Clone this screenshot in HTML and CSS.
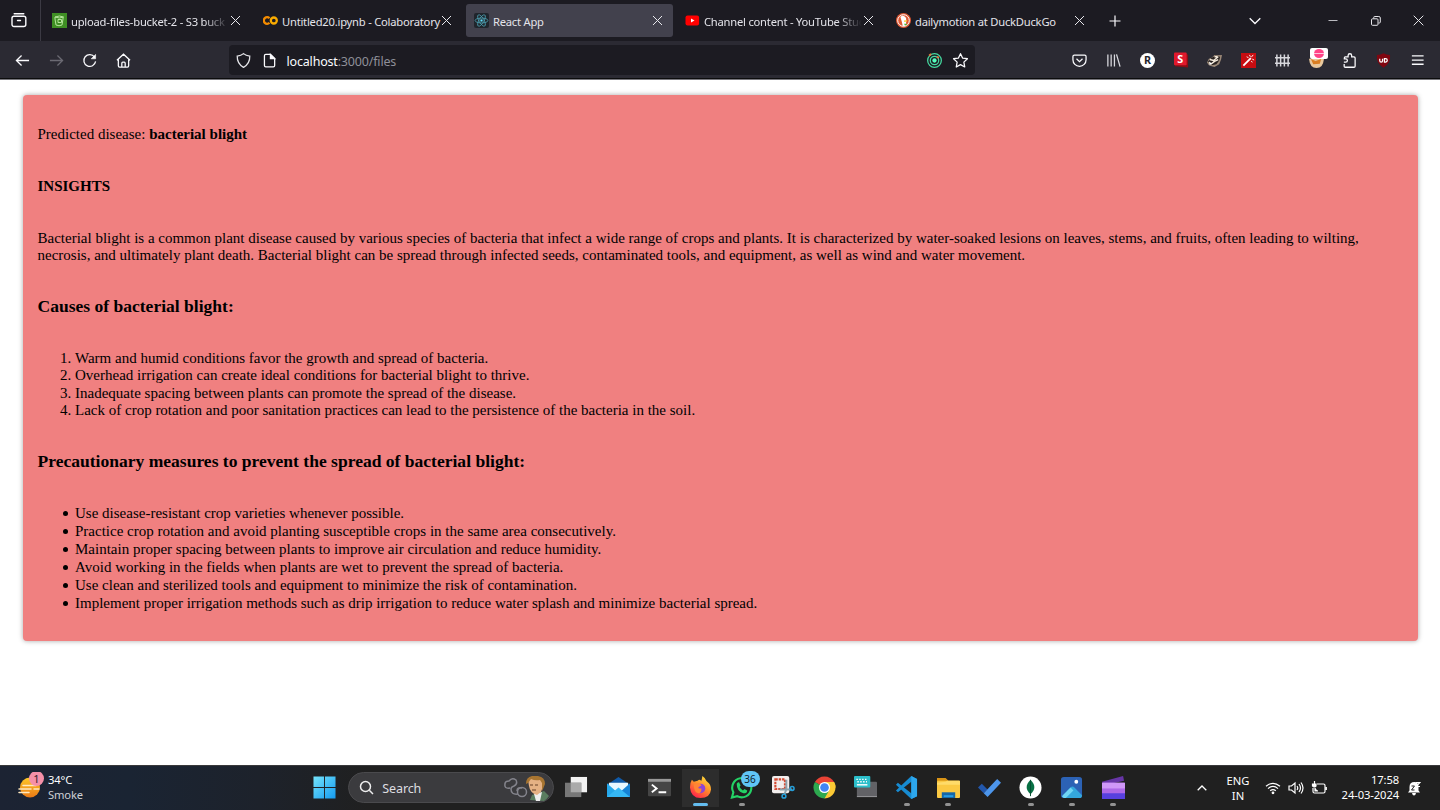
FILE: index.html
```html
<!DOCTYPE html>
<html lang="en">
<head>
<meta charset="utf-8">
<title>React App</title>
<link rel="stylesheet" href="styles.css">
</head>
<body>
<div class="screen">
<header class="tabbar">
  <div class="recent"><svg width="16" height="16" viewBox="0 0 16 16" fill="none" stroke="#fbfbfe" stroke-width="1.4" stroke-linecap="round"><path d="M3.200 1.800h9.600"/><rect x="1" y="4.300" width="13.800" height="10.200" rx="2"/><path d="M6.500 8.500h3"/></svg></div>
  <div class="tabs">
    <div class="tab">
      <svg width="15" height="15" viewBox="0 0 15 15"><rect width="15" height="15" fill="#3f8f24"/><path d="M3 4v2l1 6q3 1.500 6 0l1-6V4M3 4q4.500-2 8.500 0q-4 2-8.500 0M6 6.500h3.500v3H6z" fill="none" stroke="#b5e59b" stroke-width="1"/></svg>
      <span class="title fade">upload-files-bucket-2 - S3 buck</span><span class="close"></span>
    </div>
    <div class="tab">
      <svg width="15" height="15" viewBox="0 0 15 15" fill="none" stroke-width="2.300"><circle cx="10.800" cy="7.500" r="3" stroke="#f9ab00"/><path d="M6.500 5.200a3.300 3.300 0 1 0 0 4.600" stroke="#f38b00"/></svg>
      <span class="title">Untitled20.ipynb - Colaboratory</span><span class="close"></span>
    </div>
    <div class="tab active">
      <svg width="15" height="15" viewBox="0 0 15 15" fill="none" stroke="#4b9fb1" stroke-width=".8"><rect width="15" height="15" rx="2" fill="#20252c" stroke="none"/><ellipse cx="7.500" cy="7.500" rx="6.400" ry="2.500"/><ellipse cx="7.500" cy="7.500" rx="6.400" ry="2.500" transform="rotate(60 7.500 7.500)"/><ellipse cx="7.500" cy="7.500" rx="6.400" ry="2.500" transform="rotate(120 7.500 7.500)"/><circle cx="7.500" cy="7.500" r="1.100" fill="#61dafb"/></svg>
      <span class="title">React App</span><span class="close"></span>
    </div>
    <div class="tab">
      <svg width="15" height="15" viewBox="0 0 15 15"><rect x=".5" y="2.500" width="13.600" height="10" rx="2" fill="#f00"/><path d="M6 5.400v4.200l3.500-2.100z" fill="#fff"/></svg>
      <span class="title fade">Channel content - YouTube Stud</span><span class="close"></span>
    </div>
    <div class="tab">
      <svg width="15" height="15" viewBox="0 0 15 15"><circle cx="7.500" cy="7.500" r="7.500" fill="#de5833"/><circle cx="7.500" cy="7.500" r="5.800" fill="#de5833" stroke="#fff"/><path d="M4.400 4q2-2 4.300-.5 2 1 1.500 4l-.2 5q-2 .8-3.300.2Q6 9 4.400 4z" fill="#fff"/><path d="M8 7.500l3.200-.3-.2 1.300-2.800.6z" fill="#fc3"/><path d="M8.500 10.500l2.200.6-.3 1.500-2-.5z" fill="#4cba3c"/></svg>
      <span class="title">dailymotion at DuckDuckGo</span><span class="close"></span>
    </div>
  </div>
  <svg class="plus" width="12" height="12" viewBox="0 0 12 12" stroke="#fbfbfe" stroke-width="1.200"><path d="M6 .5v11M.5 6h11"/></svg>
  <div class="window-buttons">
    <svg width="12" height="8" viewBox="0 0 12 8" fill="none" stroke="#fbfbfe" stroke-width="1.300"><path d="M.7 1.200L6 6.500l5.300-5.300"/></svg>
    <svg width="10" height="10" viewBox="0 0 10 10" stroke="#bbbbc0"><path d="M.5 4.500h9"/></svg>
    <svg width="10" height="10" viewBox="0 0 10 10" fill="none" stroke="#e6e6ea" stroke-width="1"><rect x=".5" y="2.800" width="6.500" height="6.500" rx="1"/><path d="M2.800 2.500V1.200q0-.7.700-.7h4.300q1.500 0 1.500 1.500v4.200q0 .8-1 .8h-.8"/></svg>
    <svg width="11" height="11" viewBox="0 0 11 11" stroke="#e6e6ea"><path d="M.7.7l9.600 9.600M10.300.7L.7 10.300"/></svg>
  </div>
</header>

<nav class="toolbar">
  <div class="nav-buttons">
    <svg viewBox="0 0 16 16" stroke="#fbfbfe"><path d="M15 8H1.500M7 2.600L1.500 8 7 13.400"/></svg>
    <svg viewBox="0 0 16 16" stroke="#6b6a73"><path d="M1 8h13.500M9 2.600L14.500 8 9 13.400"/></svg>
    <svg viewBox="0 0 16 16" stroke="#fbfbfe"><path d="M13.400 4.300A6.300 6.300 0 1 0 14.500 9"/><path d="M14.500 1.500v4.700H9.800z" fill="#fbfbfe" stroke-width=".6"/></svg>
    <svg viewBox="0 0 16 16" stroke="#fbfbfe"><path d="M1 7.800L8 1.300l7 6.500M2.500 6.800v6.900q0 1.300 1.300 1.300h8.400q1.300 0 1.300-1.300V6.800M6.200 14.800v-4q0-1 1-1h1.600q1 0 1 1v4"/></svg>
  </div>
  <div class="urlbar">
    <svg viewBox="0 0 16 16" stroke="#e4e4e8"><path d="M8 .7Q10.500 3 14.700 3.300 15 11.500 8 15.300 1 11.500 1.300 3.300 5.500 3 8 .7z"/></svg>
    <svg viewBox="0 0 16 16" stroke="#fbfbfe"><path d="M4 1.500h5L13.500 6v7.300q0 1.400-1.400 1.400H4q-1.400 0-1.400-1.400V2.900Q2.600 1.500 4 1.500z"/><path d="M9 1.500V6h4.500z" fill="#fbfbfe"/></svg>
    <span class="url">localhost<span class="path">:3000/files</span></span>
    <svg viewBox="0 0 16 16" stroke="#45d9a0"><circle cx="8" cy="8" r="7.300"/><circle cx="8" cy="8" r="4.500"/><circle cx="8" cy="8" r="2.300" fill="#54ffbd" stroke="none"/><path d="M2.300 2.800l2-1.800M10.500 4.200l2.300.8" stroke="#e4773f" stroke-width="2"/></svg>
    <svg viewBox="0 0 16 16" stroke="#fbfbfe"><path d="M8 .7l2.200 4.700 5.200.7-3.800 3.600.9 5.200L8 12.400l-4.500 2.500.9-5.200L.6 6.100l5.200-.7z" stroke-linejoin="round"/></svg>
  </div>
  <div class="extensions">
    <svg viewBox="0 0 16 16" stroke="#fbfbfe"><path d="M2.500 2.200h11q1.500 0 1.500 1.500v3.500a7 7 0 0 1-14 0V3.700q0-1.500 1.500-1.500zM4.800 6.200L8 9.200l3.200-3"/></svg>
    <svg viewBox="0 0 16 16" stroke="#d9d9df"><path d="M2 1.500v13M5.500 1.500v13M9 1.500v13M11.200 1.500l3.800 13"/></svg>
    <svg viewBox="0 0 16 16"><circle cx="8" cy="8" r="8" fill="#fff"/><text x="8" y="12" class="mark dark">R</text></svg>
    <svg viewBox="0 0 16 16"><path d="M1 1L15 1.500v14L1 14z" fill="#8b0c14"/><rect x="0" y="-.5" width="13.500" height="13.500" rx="1" fill="#e0192c"/><text x="6.700" y="10.500" class="mark light">S</text></svg>
    <svg viewBox="0 0 16 16"><path d="M0 10l2-4 3-1 3-3 4 .5 4-.5-1 5-2 5-5 3-3-1-3-1z" fill="#9c8978"/><path d="M1 9l4-4 4-2 5 1-1 4-3 4-5 1z" fill="#28211f"/><path d="M3 7l4 1 5-4M4 12l4-3 4-2M8 4l3 0" fill="none" stroke="#f3e9db" stroke-width="1.600"/><path d="M2 9l3 2-2 2z" fill="#fff"/></svg>
    <svg viewBox="0 0 16 16"><rect width="16" height="16" fill="#c60d11"/><path d="M2.500 13.500l8-8" stroke="#fff" stroke-width="2"/><path d="M9 2l1 2M12 6.500l2 1M6 4l2 1M11 8.500l1 1.500M13 2l-2 2.500" stroke="#fff" stroke-width="1"/></svg>
    <svg viewBox="0 0 16 16" stroke="#d7d7dc"><path d="M2 1.500v13M6 1.500v13M10 1.500v13M14 1.500v13M0 5h16M0 11h16" stroke-width="1.600"/></svg>
    <div class="badged">
      <svg viewBox="0 0 16 16"><path d="M0 6h16q-1 10-8 10T0 6z" fill="#e9c89d"/><path d="M2 6.500l5 2 6-2-1.500 5-7 .5z" fill="#da7e22"/></svg>
      <span class="ext-badge"><i></i></span>
    </div>
    <svg viewBox="0 0 16 16" stroke="#fbfbfe"><path d="M2 9.700h2a1.700 1.700 0 0 0 0-3.500H2.500V5.200q0-1 1-1H6.500V2.700a1.900 1.900 0 0 1 3.800 0v1.500h2.500q1.200 0 1.200 1.200V14q0 1.200-1.200 1.200H3.500q-1.200 0-1.200-1.200V11.800"/></svg>
    <svg viewBox="0 0 16 16"><path d="M8 .3Q11 2 15 2.200q1 9-7 13.500Q0 11.200 1 2.200 5 2 8 .3z" fill="#800610"/><path d="M4 6v2.200q0 1.500 1.500 1.500T7 8.200V6M9 6h1.200q1.800 0 1.800 1.800t-1.800 1.900H9z" fill="none" stroke="#fff"/></svg>
    <svg viewBox="0 0 16 16" stroke="#fbfbfe"><path d="M2 3h12.500M2 7.500h12.500M2 12h12.500"/></svg>
  </div>
</nav>

<main class="page">
  <article class="card">
    <p class="prediction">Predicted disease: <b>bacterial blight</b></p>
    <h4>INSIGHTS</h4>
    <p class="summary">Bacterial blight is a common plant disease caused by various species of bacteria that infect a wide range of crops and plants. It is characterized by water-soaked lesions on leaves, stems, and fruits, often leading to wilting, necrosis, and ultimately plant death. Bacterial blight can be spread through infected seeds, contaminated tools, and equipment, as well as wind and water movement.</p>
    <h3>Causes of bacterial blight:</h3>
    <ol>
      <li>Warm and humid conditions favor the growth and spread of bacteria.</li>
      <li>Overhead irrigation can create ideal conditions for bacterial blight to thrive.</li>
      <li>Inadequate spacing between plants can promote the spread of the disease.</li>
      <li>Lack of crop rotation and poor sanitation practices can lead to the persistence of the bacteria in the soil.</li>
    </ol>
    <h3>Precautionary measures to prevent the spread of bacterial blight:</h3>
    <ul>
      <li>Use disease-resistant crop varieties whenever possible.</li>
      <li>Practice crop rotation and avoid planting susceptible crops in the same area consecutively.</li>
      <li>Maintain proper spacing between plants to improve air circulation and reduce humidity.</li>
      <li>Avoid working in the fields when plants are wet to prevent the spread of bacteria.</li>
      <li>Use clean and sterilized tools and equipment to minimize the risk of contamination.</li>
      <li>Implement proper irrigation methods such as drip irrigation to reduce water splash and minimize bacterial spread.</li>
    </ul>
  </article>
</main>

<footer class="taskbar">
  <div class="weather">
    <svg width="28" height="28" viewBox="0 0 28 28"><defs><linearGradient id="sun" x2="0" y2="1"><stop offset="0" stop-color="#ffc928"/><stop offset="1" stop-color="#e97916"/></linearGradient></defs><circle cx="13" cy="15.500" r="10" fill="url(#sun)"/><path d="M6 13.500h13M2 17h12M17 17h5M2 20.500h10" stroke="#ffe9c0" stroke-width="1.500" stroke-linecap="round"/><circle cx="19.500" cy="6.500" r="7.500" fill="#f590a8"/><text x="19.500" y="10.500" class="badge-text">1</text></svg>
    <div class="weather-text"><span>34°C</span><span class="dim">Smoke</span></div>
  </div>
  <div class="apps">
    <div class="app"><svg viewBox="0 0 24 24"><defs><linearGradient id="win" x2="1" y2="1"><stop offset="0" stop-color="#74e4fb"/><stop offset="1" stop-color="#149af0"/></linearGradient></defs><path d="M.5.500h11v11H.5zM12.500.500h11v11h-11zM.5 12.500h11v11H.5zM12.500 12.500h11v11h-11z" fill="url(#win)"/></svg></div>
    <div class="search">
      <svg width="16" height="16" viewBox="0 0 16 16" fill="none" stroke="#eee" stroke-width="1.500"><circle cx="6.500" cy="6.500" r="5"/><path d="M10.300 10.300L14 14"/></svg>
      <span>Search</span>
      <svg width="49" height="26" viewBox="0 0 49 26" fill="none"><g stroke="#84848c" stroke-width="1.500"><path d="M6 13Q0 14 1 9q0-3 4-3 3-4 7-1 2 4-2 6-3 1-3 3M7 14q0 6 7 5"/><circle cx="18" cy="17" r="4.500"/><path d="M13 16q0-4 5-3"/></g><path d="M26 25l2-5 6-2 6-2 5 5q-2 3-5 5z" fill="#5a7d60"/><path d="M30 19l2 7h4l2-9z" fill="#eee"/><path d="M24 5q5-5 14-2l1 8-2 6-4 3q-7-2-8-9z" fill="#e5b184"/><path d="M22 9Q22 2 28 1h6q7 1 7 8l-2 5-1 2V8l-2-3q-5 1-9-1l-3 4z" fill="#a87531"/><path d="M26 10h3M31 10h3M28 15h4" stroke="#674126"/></svg>
    </div>
    <div class="app"><svg viewBox="0 0 24 24"><path d="M6 1h17v16H6z" fill="#f2f2f2"/><path d="M0 7h17v15H0z" fill="#777"/><path d="M6 7h11v10H6z" fill="#aaa"/></svg></div>
    <div class="app"><svg viewBox="0 0 24 24"><path d="M0 9L12 1l12 8-12 9z" fill="#0f5aa9"/><path d="M2 7h20v5l-10 6L2 12z" fill="#e8f7ff"/><path d="M0 7.500l16 14.500H0z" fill="#25a8eb"/><path d="M24 7.500L8 22h16z" fill="#1683d6"/><path d="M0 22l12-10 12 10z" fill="#36b8f5"/></svg></div>
    <div class="app"><svg viewBox="0 0 24 24"><rect x="0" y="3" width="24" height="18" rx="1" fill="#454545"/><path d="M0 3h24v3H0z" fill="#999"/><path d="M4 9l5 4-5 4M11 17h8" fill="none" stroke="#fff" stroke-width="2"/></svg></div>
    <div class="app current"><svg viewBox="0 0 24 24"><defs><linearGradient id="fox" x1=".8" x2=".2" y2="1"><stop offset="0" stop-color="#ffe33b"/><stop offset=".45" stop-color="#ff902b"/><stop offset="1" stop-color="#ff194d"/></linearGradient></defs><path d="M3 4l2 2 4-1q1-1 2-1l2 1 1-5q3 2 4 5l1 1q4 3 4 8Q22 23 12 23T1 12q0-5 2-8z" fill="url(#fox)"/><circle cx="12" cy="13" r="5" fill="#8d45d4"/><path d="M5 9q6-4 8 1l-3 1.500q-1 2 3 1.500 0 5-3 5-5-1-5-9z" fill="#ff8435"/></svg></div>
    <div class="app running"><svg viewBox="0 0 24 24"><path d="M2 22.500l1.500-5.500a10 10 0 1 1 4 4z" fill="none" stroke="#24d366" stroke-width="2.200"/><path d="M7 8q1-2 2.500-1.500L11 10l-1 1.500q1 2 3.500 3.500l1.500-1.500 3 1.500q0 3-4 3Q7 16 7 8z" fill="#24d366"/></svg><span class="count">36</span></div>
    <div class="app"><svg viewBox="0 0 24 24"><rect x="0" y="0" width="18" height="18" rx="2" fill="#f2eeed"/><path d="M3.500 3.500h10v10h-10z" fill="none" stroke="#d54a32" stroke-width="2.200" stroke-dasharray="2.500 1"/><path d="M15 4v10l-2 5M8 14h8l5 0" fill="none" stroke="#8ca3ad" stroke-width="2"/><g fill="none" stroke="#259ed8" stroke-width="1.600"><circle cx="12.500" cy="21" r="2"/><circle cx="21" cy="13" r="2"/></g></svg></div>
    <div class="app"><svg viewBox="0 0 24 24"><path d="M12 12L2 6.300A11.500 11.500 0 0 1 22 6.300z" fill="#ea4335"/><path d="M12 12l10-5.700A11.500 11.500 0 0 1 12 23.500z" fill="#fcc934"/><path d="M12 12v11.500A11.500 11.500 0 0 1 2 6.300z" fill="#2da94f"/><path d="M12 6.300h10q1.500 3 1.500 5.700H17z" fill="#fcc934"/><path d="M7 14.800l5 3 5-3-5 8.700z" fill="#2da94f"/><circle cx="12" cy="12" r="5.800" fill="#fff"/><circle cx="12" cy="12" r="4.500" fill="#4285f4"/></svg></div>
    <div class="app"><svg viewBox="0 0 24 24"><rect x="3" y="6" width="21" height="16" rx="1" fill="#626266"/><path d="M3 21.500h21" stroke="#99999c"/><rect x="0" y="0" width="17" height="12" rx="1" fill="#2bbfcb"/><path d="M2.500 3.500h12M3.500 6h10" stroke="#fff" stroke-width="1.500" stroke-dasharray="1.500 1.500"/><path d="M3 9.200h11" stroke="#fff" stroke-width="1.500"/></svg></div>
    <div class="app running"><svg viewBox="0 0 24 24"><path d="M17 0l6 3v18l-6 3L1 9l2-2 14 11V6L3 17l-2-2z" fill="#178bd1"/><path d="M17 0l6 3v18l-6 3z" fill="#2da7ed"/></svg></div>
    <div class="app running"><svg viewBox="0 0 24 24"><path d="M0 2h9l3 3h11v8H0z" fill="#d99416"/><rect x="0" y="5" width="24" height="18" rx="1" fill="#fbc943"/><path d="M0 7l9-1 2-1h13v4H0z" fill="#ffdb69"/><path d="M5 17h14v6H5z" fill="#1466a7"/><path d="M7 20h10v2H7z" fill="#279ce4"/></svg></div>
    <div class="app"><svg viewBox="0 0 24 24"><path d="M0 12l4-4 6 6-4 4z" fill="#2257ac"/><path d="M6 18L20 3l4 4L10 22z" fill="#4d96ec"/></svg></div>
    <div class="app running"><svg viewBox="0 0 24 24"><circle cx="12" cy="12" r="11.500" fill="#fff"/><path d="M12 4q8 8 0 15-8-7 0-15z" fill="#087044"/><path d="M12 4v17" stroke="#054e32"/></svg></div>
    <div class="app running"><svg viewBox="0 0 24 24"><rect x="1" y="1" width="22" height="22" rx="3" fill="#2c62b5"/><path d="M2 21l9-9q2-2 4 0l8 8q0 3-3 3H4z" fill="#34a7dc"/><path d="M2 21l9-9 3 3-8 8H4z" fill="#70d5f4"/><circle cx="17" cy="6" r="2" fill="#fff"/></svg></div>
    <div class="app running"><svg viewBox="0 0 24 24"><path d="M0 6L22 0l1 5L1 10z" fill="#6735a6"/><rect x="0" y="7" width="24" height="17" rx="1" fill="#ae68e7"/><path d="M0 7h24v6H0z" fill="#d097f8"/><path d="M0 18h24v6H0z" fill="#5740df"/></svg></div>
  </div>
  <div class="tray">
    <svg class="chevron" width="10" height="6" viewBox="0 0 10 6" fill="none" stroke="#fff" stroke-width="1.300"><path d="M.7 5.300L5 1l4.300 4.300"/></svg>
    <div class="lang">ENG<br>IN</div>
    <div class="status">
      <svg viewBox="0 0 16 16"><path d="M1 6.300q7-6 14 0M3 8.600q5-4.500 10 0M5.200 10.800q2.800-2.500 5.600 0"/><circle cx="8" cy="12.800" r=".8" fill="#fff"/></svg>
      <svg viewBox="0 0 16 16"><path d="M1 6h2.500L7 3v10L3.500 10H1zM9 6q1.500 2 0 4M11 4q3 4 0 8M13 2.500q4 5.500 0 11"/></svg>
      <svg viewBox="0 0 16 16"><path d="M6 4h6.500Q14 4 14 5.500v6q0 1.500-1.500 1.500h-9Q2 13 2 11.500V8M15.300 7v3"/><path d="M3.500 1v3M1.500 4h3.500v2q-2 2-3.500 0zM4 8v3h3" fill="#fff"/></svg>
    </div>
    <div class="clock">17:58<br>24-03-2024</div>
    <svg class="bell" width="14" height="15" viewBox="0 0 14 15"><path d="M1 11.500l1.500-2V6q0-5 5-5 4 0 4 5v3.500l1.500 2zM5 12h4q-.5 2.500-2 2.500T5 12z" fill="#fff"/><path d="M4.500 5h3l-3 4h3" fill="none" stroke="#202020"/><path d="M9 1.500h4l-4 4h4" fill="none" stroke="#fff" stroke-width="1.200"/></svg>
  </div>
</footer>
</div>
</body>
</html>
```
FILE: styles.css
```css
* { box-sizing: border-box; }
body { margin: 0; background: #fff; }
svg { display: block; flex: none; }
.screen { width: 1440px; height: 810px; display: flex; flex-direction: column; overflow: hidden; font-family: "Noto Sans", "Open Sans", sans-serif; }

/* Browser tabs */
.tabbar { height: 41px; flex: none; background: #1c1b22; display: flex; align-items: center; color: #e4e4ea; }
.recent { width: 41px; height: 41px; padding: 12px 0 0 11px; border-right: 1px solid #3b3a43; flex: none; }
.tabs { display: flex; gap: 4px; margin-left: 2.7px; }
.tab { width: 207px; height: 33px; display: flex; align-items: center; padding-left: 8px; border-radius: 3px; }
.tab.active { background: #42414d; }
.title { width: 158px; margin-left: 4.3px; overflow: visible; white-space: nowrap; font-size: 11.2px; line-height: 18px; letter-spacing: -.22px; padding-top: 2px; }
.fade { mask-image: linear-gradient(90deg, #000 84%, transparent); }
.close { width: 9px; height: 9px; margin-left: 2.5px; background: linear-gradient(45deg, transparent 45%, #e8e8ed 45%, #e8e8ed 55%, transparent 55%), linear-gradient(135deg, transparent 45%, #e8e8ed 45%, #e8e8ed 55%, transparent 55%); }
.plus { margin-left: 14px; }
.window-buttons { width: 191px; margin-left: auto; display: grid; grid-template-columns: 79px 43px 41px 28px; place-items: center start; }
.window-buttons svg:nth-child(4) { margin-left: 1px; }

/* Navigation */
.toolbar { height: 39px; flex: none; background: #2b2a33; border-bottom: 1px solid #77767c; box-shadow: inset 0 -1px #0c0c0d; display: flex; align-items: center; }
.toolbar svg { width: 15px; height: 15px; fill: none; stroke-width: 1.35; overflow: visible; }
.nav-buttons { display: flex; gap: 18.5px; margin-left: 15px; width: 214px; }
.urlbar { width: 746px; height: 30px; display: flex; align-items: center; background: #1c1b22; border-radius: 4px; padding: 0 7.5px 0 7px; }
.urlbar svg:nth-child(2) { margin-left: 11px; }
.url { font-size: 12.5px; margin-left: 9.5px; flex: 1; color: #fbfbfe; letter-spacing: -.18px; padding-top: 2px; }
.path { color: #8f8f98; }
.urlbar svg:last-child { margin-left: 11px; }
.extensions { display: grid; grid-template-columns: repeat(11, 33.75px); justify-items: center; margin-left: 88px; }
.mark { font: bold 11.5px "Noto Sans", sans-serif; text-anchor: middle; stroke: none; }
.mark.dark { fill: #24232a; }
.mark.light { fill: #fff; }
.badged { position: relative; }
.ext-badge { position: absolute; left: 1px; top: -5px; width: 18px; height: 11px; border-radius: 2px; background: #fff; display: grid; place-items: center; }
.ext-badge i { width: 10px; height: 9px; border-radius: 50%; background: linear-gradient(#ff4387 40%, #ffc5dc 40%, #ffc5dc 60%, #ff4387 60%); }

/* Page content */
.page { flex: 1; padding: 15px 22px 0 22.5px; font: 15px/17.333px "Liberation Serif", "Times New Roman", serif; color: #000; }
.card { height: 546px; padding: 31px 15px 0; border-radius: 4px; background: #f08080; box-shadow: 0 0 5px rgba(0, 0, 0, .35); }
.card p, .card h3, .card h4, .card ol, .card ul { margin: 0; }
.card h4 { font-size: 15px; margin-top: 34.2px; }
.card .summary { margin-top: 35.1px; }
.card h3 { font-size: 17.55px; line-height: 20px; margin-top: 31.7px; }
.card ol, .card ul { padding-left: 37.5px; }
.card ol { margin-top: 33.8px; }
.card ul { margin-top: 32.6px; line-height: 18px; list-style: none; }
.card ul li::before { content: ""; display: inline-block; width: 5px; height: 5px; margin: 0 7.5px 0 -12.5px; border-radius: 50%; background: #000; vertical-align: 2px; }

/* Taskbar */
.taskbar { height: 45px; flex: none; display: flex; align-items: center; border-top: 1px solid #39393b; background: linear-gradient(90deg, #1c2333 0, #1a2433 130px, #1d222b 260px, #202020 370px); color: #fff; font-size: 11.2px; line-height: 15px; }
.weather { width: 304px; padding-left: 17px; display: flex; align-items: center; flex: none; }
.weather > svg { margin-top: -5px; }
.weather-text { display: grid; margin: -2px 0 0 3px; letter-spacing: -.15px; }
.dim { color: #cdd0d5; }
.badge-text { font-size: 11px; text-anchor: middle; fill: #38202a; }
.apps { display: flex; align-items: center; flex: none; margin-top: -1px; }
.app { width: 41.25px; height: 38px; display: grid; place-items: center; position: relative; }
.app > svg { width: 23px; height: 23px; overflow: visible; }
.current { background: #2d2d2d; background-clip: content-box; padding: 0 2px; }
.current::after, .running::after { content: ""; position: absolute; left: calc(50% - 3px); bottom: 1px; width: 6px; height: 3px; border-radius: 2px; background: #929292; }
.current::after { left: calc(50% - 7.5px); width: 15px; background: #64bdf0; }
.count { position: absolute; right: 3px; top: 2.5px; width: 19px; height: 16px; border-radius: 8px; background: #60c5f7; color: #10222d; font-size: 10px; line-height: 16px; text-align: center; }
.search { width: 206px; height: 31px; margin: 0 2px 0 3px; padding-left: 10px; border: 1px solid #4a4a4d; border-radius: 16px; background: #3b3b3e; display: flex; align-items: center; font-size: 12.5px; letter-spacing: -.1px; color: #dedee0; }
.search span { margin-left: 7px; flex: 1; padding-top: 1px; }
.tray { display: flex; align-items: center; margin-left: auto; padding-right: 19px; }
.chevron { margin-right: 19px; }
.lang { width: 24px; text-align: center; margin: -1px 14.5px 0 0; }
.status { display: flex; gap: 7px; margin-right: 11.5px; }
.status svg { width: 16px; height: 16px; fill: none; stroke: #fff; stroke-width: 1.2; }
.clock { width: 61px; text-align: right; white-space: nowrap; letter-spacing: -.1px; margin-top: -2px; }
.bell { margin-left: 8px; }
```
